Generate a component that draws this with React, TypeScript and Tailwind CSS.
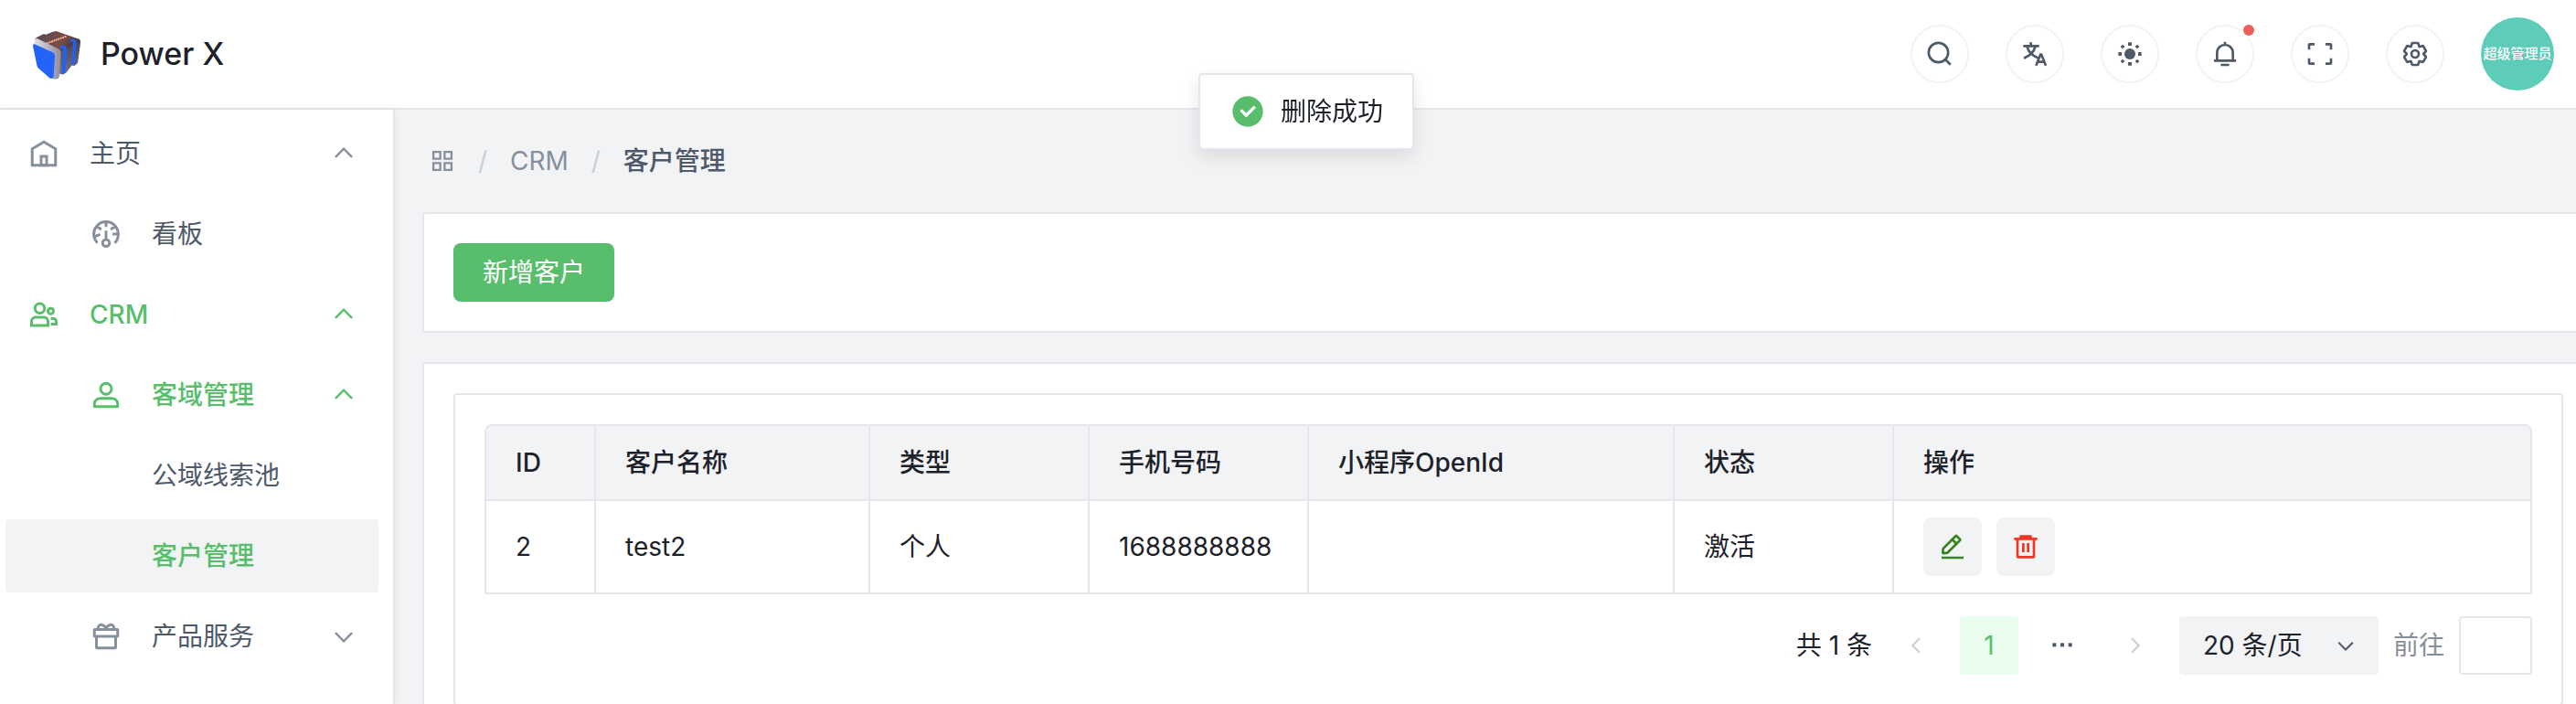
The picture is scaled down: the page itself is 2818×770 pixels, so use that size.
import React from "react";

type IconProps = { className?: string };

function Icon({ className = "", children }: IconProps & { children: React.ReactNode }) {
  return (
    <svg
      viewBox="0 0 48 48"
      fill="none"
      stroke="currentColor"
      strokeWidth={4}
      className={`shrink-0 ${className}`}
      aria-hidden="true"
    >
      {children}
    </svg>
  );
}

const HomeIcon = (p: IconProps) => (
  <Icon {...p}>
    <path d="M7 17 24 7l17 10v24H7V17Z" />
    <path d="M20 28h8v13h-8V28Z" />
  </Icon>
);
const DashboardIcon = (p: IconProps) => (
  <Icon {...p}>
    <path d="M41.808 24c.118 4.63-1.486 9.333-5.21 13m5.21-13h-8.309m8.309 0c-.112-4.38-1.767-8.694-4.627-12M24 6c5.531 0 10.07 2.404 13.18 6M24 6c-5.724 0-10.384 2.574-13.5 6.38M24 6v7.5M37.18 12 31 17.5m-20.5-5.12L17 17.5m-6.5-5.12C6.99 16.662 5.44 22.508 6.53 28m4.872 9c-2.65-2.609-4.226-5.742-4.873-9m0 0 8.97-3.5" />
    <path d="M24 32a5 5 0 1 0 0 10 5 5 0 0 0 0-10Zm0 0V19" />
  </Icon>
);
const GroupIcon = (p: IconProps) => (
  <Icon {...p}>
    <circle cx="18" cy="15" r="7" />
    <circle cx="34" cy="19" r="4" />
    <path d="M6 34a6 6 0 0 1 6-6h12a6 6 0 0 1 6 6v6H6v-6ZM34 30h4a4 4 0 0 1 4 4v4h-8" />
  </Icon>
);
const UserIcon = (p: IconProps) => (
  <Icon {...p}>
    <path d="M7 37c0-4.97 4.03-8 9-8h16c4.97 0 9 3.03 9 8v3a1 1 0 0 1-1 1H8a1 1 0 0 1-1-1v-3Z" />
    <circle cx="24" cy="15" r="8" />
  </Icon>
);
const GiftIcon = (p: IconProps) => (
  <Icon {...p}>
    <path d="M8 14h32a1 1 0 0 1 1 1v8a1 1 0 0 1-1 1H8a1 1 0 0 1-1-1v-8a1 1 0 0 1 1-1Z" />
    <path d="M10 24v16a1 1 0 0 0 1 1h26a1 1 0 0 0 1-1V24" />
    <path d="M12.500 14c-1-5 2.500-7.200 5-6.800 4 .600 6.500 3.800 6.500 6.800 0-3 2.500-6.200 6.500-6.800 2.500-.400 6 1.800 5 6.800" />
  </Icon>
);
const UpIcon = (p: IconProps) => (
  <Icon {...p}>
    <path d="M39.6 30.557 24.043 15 8.487 30.557" />
  </Icon>
);
const DownIcon = (p: IconProps) => (
  <Icon {...p}>
    <path d="M39.6 17.443 24.043 33 8.487 17.443" />
  </Icon>
);
const LeftIcon = (p: IconProps) => (
  <Icon {...p}>
    <path d="M32 8.4 16.444 23.956 32 39.513" />
  </Icon>
);
const RightIcon = (p: IconProps) => (
  <Icon {...p}>
    <path d="m16 39.513 15.556-15.557L16 8.4" />
  </Icon>
);
const SearchIcon = (p: IconProps) => (
  <Icon {...p}>
    <path d="M33.072 33.071c6.248-6.248 6.248-16.379 0-22.627-6.249-6.249-16.38-6.249-22.628 0-6.248 6.248-6.248 16.379 0 22.627 6.248 6.248 16.38 6.248 22.628 0Zm0 0 8.485 8.485" />
  </Icon>
);
const LanguageIcon = (p: IconProps) => (
  <Icon {...p}>
    <path d="m42 43-2.385-6M26 43l2.384-6m11.231 0-.795-2-4.18-10h-1.28l-4.181 10-.795 2m11.231 0h-11.23M17 5l1 5M5 11h26M11 11s1.889 7.826 6.611 12.174C22.333 27.522 30 31 30 31M25 11s-1.889 7.826-6.611 12.174C13.667 27.522 6 31 6 31" />
  </Icon>
);
const SunIcon = (p: IconProps) => (
  <Icon {...p}>
    <g fill="currentColor" stroke="none">
      <circle cx="24" cy="24" r="9" />
      <rect x="21" y="5" width="6" height="5.500" rx=".5" />
      <rect x="21" y="37.500" width="6" height="5.500" rx=".5" />
      <rect x="5" y="21" width="5.500" height="6" rx=".5" />
      <rect x="37.500" y="21" width="5.500" height="6" rx=".5" />
      <rect x="-2.500" y="-2.500" width="5" height="5" rx=".5" transform="translate(12 12) rotate(45)" />
      <rect x="-2.500" y="-2.500" width="5" height="5" rx=".5" transform="translate(36 12) rotate(45)" />
      <rect x="-2.500" y="-2.500" width="5" height="5" rx=".5" transform="translate(12 36) rotate(45)" />
      <rect x="-2.500" y="-2.500" width="5" height="5" rx=".5" transform="translate(36 36) rotate(45)" />
    </g>
  </Icon>
);
const BellIcon = (p: IconProps) => (
  <Icon {...p}>
    <path d="M24 9c7.18 0 13 5.82 13 13v13H11V22c0-7.18 5.82-13 13-13Zm0 0V4M6 35h36m-25 7h14" />
  </Icon>
);
const FullscreenIcon = (p: IconProps) => (
  <Icon {...p}>
    <path d="M42 17V9a1 1 0 0 0-1-1h-8M6 17V9a1 1 0 0 1 1-1h8m27 23v8a1 1 0 0 1-1 1h-8M6 31v8a1 1 0 0 0 1 1h8" />
  </Icon>
);
const SettingsIcon = (p: IconProps) => (
  <Icon {...p}>
    <path d="M18.797 6.732A1 1 0 0 1 19.76 6h8.48a1 1 0 0 1 .964.732l1.285 4.628a1 1 0 0 0 1.213.7l4.651-1.2a1 1 0 0 1 1.116.468l4.24 7.344a1 1 0 0 1-.153 1.2L38.193 23.3a1 1 0 0 0 0 1.402l3.364 3.427a1 1 0 0 1 .153 1.2l-4.24 7.344a1 1 0 0 1-1.116.468l-4.65-1.2a1 1 0 0 0-1.214.7l-1.285 4.628a1 1 0 0 1-.964.732h-8.48a1 1 0 0 1-.963-.732L17.51 36.64a1 1 0 0 0-1.213-.7l-4.65 1.2a1 1 0 0 1-1.116-.468l-4.24-7.344a1 1 0 0 1 .153-1.2L9.809 24.7a1 1 0 0 0 0-1.402l-3.364-3.427a1 1 0 0 1-.153-1.2l4.24-7.344a1 1 0 0 1 1.116-.468l4.65 1.2a1 1 0 0 0 1.213-.7l1.286-4.628Z" />
    <path d="M30 24a6 6 0 1 1-12 0 6 6 0 0 1 12 0Z" />
  </Icon>
);
const AppsIcon = (p: IconProps) => (
  <Icon {...p}>
    <path d="M7 7h13v13H7V7ZM28 7h13v13H28V7ZM7 28h13v13H7V28ZM28 28h13v13H28V28Z" />
  </Icon>
);
const EditIcon = (p: IconProps) => (
  <Icon {...p}>
    <path d="m30.48 19.038 5.733-5.734a1 1 0 0 0 0-1.414l-5.586-5.586a1 1 0 0 0-1.414 0l-5.734 5.734m7 7L15.763 33.754a1 1 0 0 1-.59.286l-6.048.708a1 1 0 0 1-1.113-1.069l.477-6.31a1 1 0 0 1 .29-.631l14.7-14.7m7 7-7-7M6 42h36" />
  </Icon>
);
const DeleteIcon = (p: IconProps) => (
  <Icon {...p}>
    <path d="M5 11h5.5m0 0v29a1 1 0 0 0 1 1h25a1 1 0 0 0 1-1V11m-27 0H16m21.5 0H43m-5.5 0H32m-16 0V7h16v4m-16 0h16M20 18v15M28 18v15" />
  </Icon>
);
const MoreIcon = (p: IconProps) => (
  <Icon {...p}>
    <g fill="currentColor" stroke="none">
      <rect x="8" y="20" width="6" height="6" />
      <rect x="21" y="20" width="6" height="6" />
      <rect x="34" y="20" width="6" height="6" />
    </g>
  </Icon>
);
const SuccessIcon = (p: IconProps) => (
  <Icon {...p}>
    <path
      fill="currentColor"
      stroke="none"
      fillRule="evenodd"
      d="M24 44c11.046 0 20-8.954 20-20S35.046 4 24 4 4 12.954 4 24s8.954 20 20 20Zm10.207-24.379a1 1 0 0 0 0-1.414l-1.414-1.414a1 1 0 0 0-1.414 0L22 26.172l-4.878-4.88a1 1 0 0 0-1.415 0l-1.414 1.415a1 1 0 0 0 0 1.414l7 7a1 1 0 0 0 1.414 0l11.5-11.5Z"
    />
  </Icon>
);

function Logo() {
  return (
    <svg viewBox="0 0 56 56" className="size-14 shrink-0" aria-hidden="true">
      <defs>
        <linearGradient id="top" x1="0" y1="0" x2="1" y2="0.400">
          <stop offset="0" stopColor="#4d4c5c" />
          <stop offset=".45" stopColor="#6e4a4c" />
          <stop offset=".7" stopColor="#7a4c48" />
          <stop offset="1" stopColor="#3d3852" />
        </linearGradient>
        <linearGradient id="side" x1="0" y1="0" x2="0" y2="1">
          <stop offset="0" stopColor="#4d3f50" />
          <stop offset="1" stopColor="#74748f" />
        </linearGradient>
        <linearGradient id="edge" x1="0" y1="0" x2="1" y2="0">
          <stop offset="0" stopColor="#e0e1e6" />
          <stop offset="1" stopColor="#8c8c9c" />
        </linearGradient>
      </defs>
      <path d="M30 24 52 11.500q2.500 1 2 4.500l-3 22-3.500 3-3-.500-6 8-4 2-3-1-3 5Z" fill="url(#side)" />
      <path d="M4 13q0-2 2-3l8-4 2 1 7-3 4.500-1L53 12q1 2-1 3L32 26 5 15Z" fill="url(#top)" />
      <path d="M31.500 20c4-2.500 8-1 7.600 4.500L37.500 49l-4 1.500L35 26c.2-3.500-1-5-3.500-4.500Z" fill="#1f63f6" />
      <path d="M43 12.500c4-1.500 7 .5 6.500 4.500L47.500 38l-3.500 2.500L46 18c.2-3-1-4.200-3.500-4Z" fill="#1f63f6" />
      <path d="M3.500 13.500q0-2.500 3-2.500L30 22.500q3 1.500 2.800 5L31 52q-.5 3.500-4 3.500h-3V30L3.500 18Z" fill="url(#edge)" />
      <path d="M2 19q0-2.500 2.500-1.500L24 26.500q2 1 2 3.500l-1.500 24q-2 1.500-4 .5L8.500 44q-1.500-1-2-3Z" fill="#2463f8" />
      <path d="m17 16.500 22-8" stroke="#f3b48c" strokeWidth="2" strokeDasharray="2 .6" />
    </svg>
  );
}

type NavProps = {
  label: string;
  icon?: React.ReactNode;
  nested?: boolean;
  tone?: "normal" | "active" | "current";
  arrow?: "up" | "down";
};

function NavItem({ label, icon, nested, tone = "normal", arrow }: NavProps) {
  const text =
    tone === "normal" ? "text-[#4e5969]" : "text-[#58be6b] font-medium";
  const mark = tone === "normal" ? "text-[#86909c]" : "text-[#58be6b]";
  return (
    <li>
      <a
        href="#"
        className={`flex h-20 items-center rounded pr-6 ${nested ? "pl-[92px]" : "pl-6"} ${text} ${
          tone === "current" ? "bg-[#f2f3f5]" : ""
        }`}
      >
        <span className={`mr-8 flex w-9 shrink-0 ${mark}`}>{icon}</span>
        <span className="flex-1">{label}</span>
        {arrow === "up" && <UpIcon className={`size-7 ${mark}`} />}
        {arrow === "down" && <DownIcon className={`size-7 ${mark}`} />}
      </a>
    </li>
  );
}

const tools = [
  { label: "搜索", icon: <SearchIcon className="size-8" /> },
  { label: "语言", icon: <LanguageIcon className="size-8" /> },
  { label: "主题", icon: <SunIcon className="size-8" /> },
  { label: "消息", icon: <BellIcon className="size-8" />, dot: true },
  { label: "全屏", icon: <FullscreenIcon className="size-8" /> },
  { label: "设置", icon: <SettingsIcon className="size-8" /> },
];

const headings = ["ID", "客户名称", "类型", "手机号码", "小程序OpenId", "状态", "操作"];
const rows = [["2", "test2", "个人", "1688888888", "", "激活"]];

const cell = "border-b-2 border-r-2 border-[#e5e6eb] px-8 text-left";

export default function App() {
  return (
    <div className="flex h-screen flex-col overflow-hidden bg-[#f2f3f5] font-['Inter','Noto_Sans_CJK_SC',sans-serif] text-[28px] leading-[44px] text-[#1d2129]">
      <header className="flex h-[120px] shrink-0 items-center justify-between border-b-2 border-[#e5e6eb] bg-white pl-[34px] pr-6">
        <div className="flex items-center gap-5">
          <Logo />
          <h1 className="text-[34px] font-medium">Power X</h1>
        </div>
        <div className="flex items-center gap-10">
          {tools.map((t) => (
            <button
              key={t.label}
              type="button"
              aria-label={t.label}
              className="relative flex size-16 items-center justify-center rounded-full border-2 border-[#f2f3f5] text-[#4e5969]"
            >
              {t.icon}
              {t.dot && (
                <span className="absolute -right-1 -top-1 size-4 rounded-full border-2 border-white bg-[#ec5f59]" />
              )}
            </button>
          ))}
          <div className="flex size-20 items-center justify-center whitespace-nowrap rounded-full bg-[#5dccb8] text-[15px] font-medium text-white">
            超级管理员
          </div>
        </div>
      </header>

      <div className="flex min-h-0 flex-1">
        <aside className="w-[432px] shrink-0 border-r-2 border-[#e5e6eb] bg-white shadow-[0_0_8px_rgba(0,0,0,0.06)]">
          <nav>
            <ul className="flex flex-col gap-2 py-2 pl-1.5 pr-4">
              <NavItem label="主页" icon={<HomeIcon className="size-9" />} arrow="up" />
              <NavItem label="看板" nested icon={<DashboardIcon className="size-9" />} />
              <NavItem label="CRM" tone="active" icon={<GroupIcon className="size-9" />} arrow="up" />
              <NavItem label="客域管理" nested tone="active" icon={<UserIcon className="size-9" />} arrow="up" />
              <NavItem label="公域线索池" nested />
              <NavItem label="客户管理" nested tone="current" />
              <NavItem label="产品服务" nested icon={<GiftIcon className="size-9" />} arrow="down" />
            </ul>
          </nav>
        </aside>

        <main className="min-w-0 flex-1 overflow-hidden pl-[30px]">
          <nav aria-label="面包屑" className="flex h-28 items-center pl-2">
            <a href="#" aria-label="首页" className="text-[#86909c]">
              <AppsIcon className="size-7" />
            </a>
            <span className="w-[60px] text-center text-[#c9cdd4]">/</span>
            <a href="#" className="text-[#86909c]">
              CRM
            </a>
            <span className="w-[60px] text-center text-[#c9cdd4]">/</span>
            <span className="font-medium text-[#4e5969]">客户管理</span>
          </nav>

          <div className="-mr-5 flex flex-col gap-8">
            <section className="rounded border-2 border-[#e5e6eb] bg-white p-8">
              <button
                type="button"
                className="block h-16 rounded-lg bg-[#58be6b] px-8 text-white"
              >
                新增客户
              </button>
            </section>

            <section className="rounded border-2 border-[#e5e6eb] bg-white p-8">
              <div className="rounded border-2 border-[#e5e6eb] p-8">
                <table className="w-full table-fixed border-separate border-spacing-0 rounded-t-lg border-l-2 border-t-2 border-[#e5e6eb]">
                  <colgroup>
                    <col className="w-[120px]" />
                    <col className="w-[300px]" />
                    <col className="w-[240px]" />
                    <col className="w-[240px]" />
                    <col className="w-[400px]" />
                    <col className="w-[240px]" />
                    <col />
                  </colgroup>
                  <thead>
                    <tr>
                      {headings.map((h) => (
                        <th
                          key={h}
                          scope="col"
                          className={`${cell} h-[82px] bg-[#f2f3f5] font-medium first:rounded-tl-md last:rounded-tr-md`}
                        >
                          {h}
                        </th>
                      ))}
                    </tr>
                  </thead>
                  <tbody>
                    {rows.map((r) => (
                      <tr key={r[0]}>
                        {r.map((v, i) => (
                          <td key={i} className={`${cell} h-[102px]`}>
                            {v}
                          </td>
                        ))}
                        <td className={`${cell} h-[102px]`}>
                          <div className="flex gap-4">
                            <button
                              type="button"
                              aria-label="编辑"
                              className="flex size-16 items-center justify-center rounded-lg bg-[#f2f3f5] text-[#37831f]"
                            >
                              <EditIcon className="size-8" />
                            </button>
                            <button
                              type="button"
                              aria-label="删除"
                              className="flex size-16 items-center justify-center rounded-lg bg-[#f2f3f5] text-[#ee3524]"
                            >
                              <DeleteIcon className="size-8" />
                            </button>
                          </div>
                        </td>
                      </tr>
                    ))}
                  </tbody>
                </table>

                <div className="mt-6 flex items-center justify-end">
                  <span className="mr-4">共 1 条</span>
                  <button type="button" aria-label="上一页" disabled className="mr-4 flex size-16 items-center justify-center text-[#c9cdd4]">
                    <LeftIcon className="size-6" />
                  </button>
                  <button type="button" aria-current="page" className="mr-4 size-16 rounded bg-[#eafdef] text-[#58be6b]">
                    1
                  </button>
                  <span className="mr-4 flex size-16 items-center justify-center text-[#4e5969]">
                    <MoreIcon className="size-8" />
                  </span>
                  <button type="button" aria-label="下一页" disabled className="mr-4 flex size-16 items-center justify-center text-[#c9cdd4]">
                    <RightIcon className="size-6" />
                  </button>
                  <div className="relative mr-4 flex items-center">
                    <select
                      aria-label="每页条数"
                      className="h-16 w-[218px] appearance-none rounded bg-[#f2f3f5] pl-[26px]"
                    >
                      <option>20 条/页</option>
                    </select>
                    <DownIcon className="pointer-events-none absolute right-6 size-6 text-[#4e5969]" />
                  </div>
                  <label htmlFor="page" className="mr-4 text-[#86909c]">
                    前往
                  </label>
                  <input
                    id="page"
                    type="text"
                    className="h-16 w-20 rounded border-2 border-[#e5e6eb] bg-white px-2 text-center"
                  />
                </div>
              </div>
            </section>
          </div>
        </main>
      </div>

      <div
        role="status"
        className="fixed left-[calc(50%+20px)] top-20 flex -translate-x-1/2 items-center gap-4 rounded border-2 border-[#e5e6eb] bg-white px-8 py-[18px] shadow-[0_8px_20px_rgba(0,0,0,0.1)]"
      >
        <SuccessIcon className="size-10 text-[#58be6b]" />
        <span>删除成功</span>
      </div>
    </div>
  );
}
